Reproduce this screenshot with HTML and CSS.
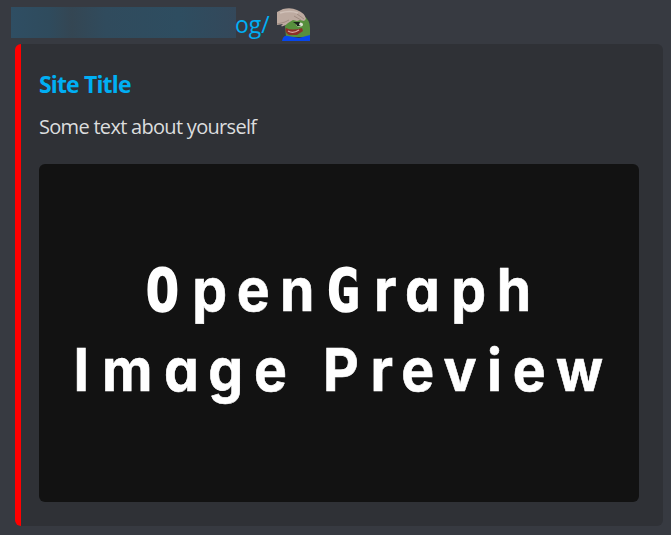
FILE: index.html
```html
<!DOCTYPE html>
<html lang="en">
<head>
<meta charset="utf-8">
<title>Link preview</title>
<link rel="stylesheet" href="styles.css">
</head>
<body>
<main class="message">
  <div class="link-row">
    <span class="redacted"></span><a class="link">og/</a>
    <svg class="emoji" viewBox="0 0 34 33" aria-hidden="true">
      <path fill="#578f3d" d="M8 18 14 10 27 8Q33 12 33 20V29H9Z"/>
      <path fill="#0747ec" d="M5 33Q6 27 11 28L22 30 33 27V33Z"/>
      <path fill="#8d3028" d="M9 20Q15 23 25 20L26 23 20 27H12Q7 24 9 20Z"/>
      <path fill="none" stroke="#d7a5a0" stroke-width="1.2" d="M11 23Q16 26 22 22"/>
      <ellipse cx="22.5" cy="16.5" rx="3.5" ry="2" fill="#dce4d4"/>
      <path fill="#17251a" d="M16 14 23 14 22 17 24 18 20 18 19 16Z"/>
      <path fill="#bdaaa0" d="M0 4 6 1Q14-1 20 2Q28 5 29 11L27 13 23 12 20 13 16 12 11 15Q8 19 4 18L6 16 0 17Z"/>
      <path fill="none" stroke="#988378" stroke-width=".8" d="M0 16 8 14 12 12M17 8 24 12M20 6 27 11"/>
      <path fill="none" stroke="#d0c1b8" stroke-width="1.5" d="M3 5Q13 2 21 5"/>
    </svg>
  </div>
  <article class="embed">
    <h1 class="title">Site Title</h1>
    <p class="description">Some text about yourself</p>
    <svg class="preview" viewBox="39 164 600 338">
      <g class="preview-text" transform="scale(.93 1)">
        <text y="311" x="174.7 225.4 272.4 319.5 369.1 414.2 454.3 504.1 552.7"><tspan class="narrow">O</tspan>pen<tspan class="narrow">G</tspan>raph</text>
        <text y="391" x="87.4 136.8 195 242.6 290.9 330 366.7 410.5 449.2 494.6 531.7 569.1 623.1">Image Preview</text>
      </g>
    </svg>
  </article>
</main>
</body>
</html>
```
FILE: styles.css
```css
* { box-sizing: border-box; }
body {
  margin: 0;
  background: #373a41;
  font-family: "Open Sans", sans-serif;
}
.message { height: 535px; padding: 7px 8px 9px 11px; overflow: hidden; }
.link-row { display: flex; height: 37px; align-items: flex-start; }
.redacted {
  width: 225px;
  height: 31px;
  background: linear-gradient(90deg, #2f4e63 0, #2f4b5d 17%, #344653 27%, #304b5d 42%, #2e4d60 75%, #34485a 100%);
}
.link { width: 41px; margin-left: -1px; margin-right: 1px; color: #00aff4; font-size: 23px; line-height: 35px; }
.emoji { width: 34px; height: 33px; margin-top: 1px; }
.embed {
  height: 482px;
  margin-left: 4px;
  padding: 24px 24px 24px 18px;
  border-left: 6px solid #f00;
  border-radius: 6px;
  background: #2f3136;
}
.title { margin: 0; color: #00aff4; font-size: 23px; line-height: 32px; letter-spacing: -.85px; }
.description { margin: 10px 0 20px; color: #dcddde; font-size: 20px; line-height: 34px; letter-spacing: -.7px; white-space: nowrap; }
.preview { display: block; width: 600px; height: 338px; border-radius: 6px; background: #121212; }
.preview-text {
  fill: #fff;
  stroke: #fff;
  stroke-width: .6px;
  font: 700 59.5px Inter, sans-serif;
  font-feature-settings: "cv11" 1;
  text-anchor: middle;
}
.narrow { font-family: "DejaVu Sans Mono", monospace; stroke-width: 1.6px; }
```
